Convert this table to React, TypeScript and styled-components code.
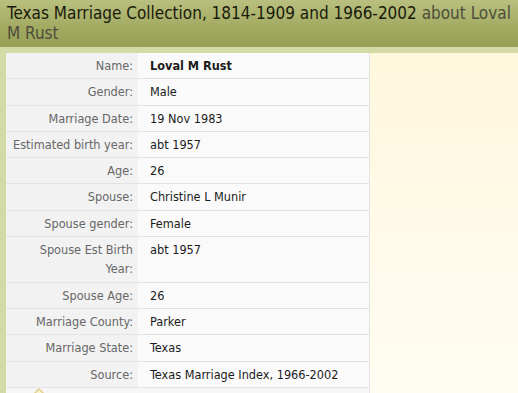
import styled, { createGlobalStyle } from 'styled-components';

const GlobalStyle = createGlobalStyle`
  html, body {
    margin: 0;
    padding: 0;
    background: #fffaea;
  }
  body {
    font-family: "DejaVu Sans Condensed", "DejaVu Sans", Tahoma, sans-serif;
    font-stretch: condensed;
  }
`;

const Page = styled.div`
  width: 518px;
  height: 393px;
  overflow: hidden;
  display: flex;
  flex-flow: column nowrap;
`;

const Header = styled.h1`
  margin: 0;
  padding: 3px 7px 4px;
  font-size: 17px;
  font-weight: normal;
  line-height: 20px;
  color: #1a1a0c;
  background: linear-gradient(to bottom, #b9c07f 0%, #a3ab63 55%, #98a058 100%);
`;

const About = styled.span`
  color: #4e4e3c;
`;

const Body = styled.div`
  flex: 1 1 auto;
  display: flex;
  flex-flow: row nowrap;
  align-items: flex-start;
  border-top: 6px solid #d3daa6;
  border-left: 6px solid #d3daa6;
  background: linear-gradient(to bottom, #fff8dd 0%, #fffaea 60%, #fffcf2 100%);
  min-height: 0;
`;

const Column = styled.div`
  flex: 0 0 363px;
  display: flex;
  flex-flow: column nowrap;
  background: #f6f6f6;
  border-right: 1px solid #e4e4e4;
  align-self: stretch;
`;

const Table = styled.table`
  border-collapse: collapse;
  table-layout: fixed;
  width: 100%;
  font-size: 12.6px;
  line-height: 19.3px;
`;

const LabelCol = styled.col`
  width: 132px;
`;

const Label = styled.th`
  padding: 3px 5px 3px 6px;
  text-align: right;
  vertical-align: top;
  font-weight: normal;
  color: #676767;
  background: #f2f2f2;
  border-bottom: 1px solid #e3e3e3;
`;

const Value = styled.td<{ $strong?: boolean }>`
  padding: 3px 8px 3px 12px;
  vertical-align: top;
  color: #1c1c1c;
  font-weight: ${(p) => (p.$strong ? 'bold' : 'normal')};
  background: #fafafa;
  border-bottom: 1px solid #e3e3e3;
`;

const Footer = styled.div`
  position: relative;
  height: 8px;
`;

const Chevron = styled.svg`
  position: absolute;
  left: 24px;
  top: -1px;
`;

const rows: [string, string][] = [
  ['Name:', 'Loval M Rust'],
  ['Gender:', 'Male'],
  ['Marriage Date:', '19 Nov 1983'],
  ['Estimated birth year:', 'abt 1957'],
  ['Age:', '26'],
  ['Spouse:', 'Christine L Munir'],
  ['Spouse gender:', 'Female'],
  ['Spouse Est Birth Year:', 'abt 1957'],
  ['Spouse Age:', '26'],
  ['Marriage County:', 'Parker'],
  ['Marriage State:', 'Texas'],
  ['Source:', 'Texas Marriage Index, 1966-2002'],
];

const App = () => (
  <>
    <GlobalStyle />
    <Page>
      <Header>
        Texas Marriage Collection, 1814-1909 and 1966-2002 <About>about Loval M Rust</About>
      </Header>
      <Body>
        <Column>
          <Table>
            <colgroup>
              <LabelCol />
              <col />
            </colgroup>
            <tbody>
              {rows.map(([label, value], i) => (
                <tr key={label}>
                  <Label>{label}</Label>
                  <Value $strong={i === 0}>{value}</Value>
                </tr>
              ))}
            </tbody>
          </Table>
          <Footer>
            <Chevron width="18" height="10" viewBox="0 0 18 10">
              <path d="M2 9 L9 2 L16 9" fill="#fbf3d0" stroke="#e2cf8c" strokeWidth="1.5" />
            </Chevron>
          </Footer>
        </Column>
      </Body>
    </Page>
  </>
);

export default App;
